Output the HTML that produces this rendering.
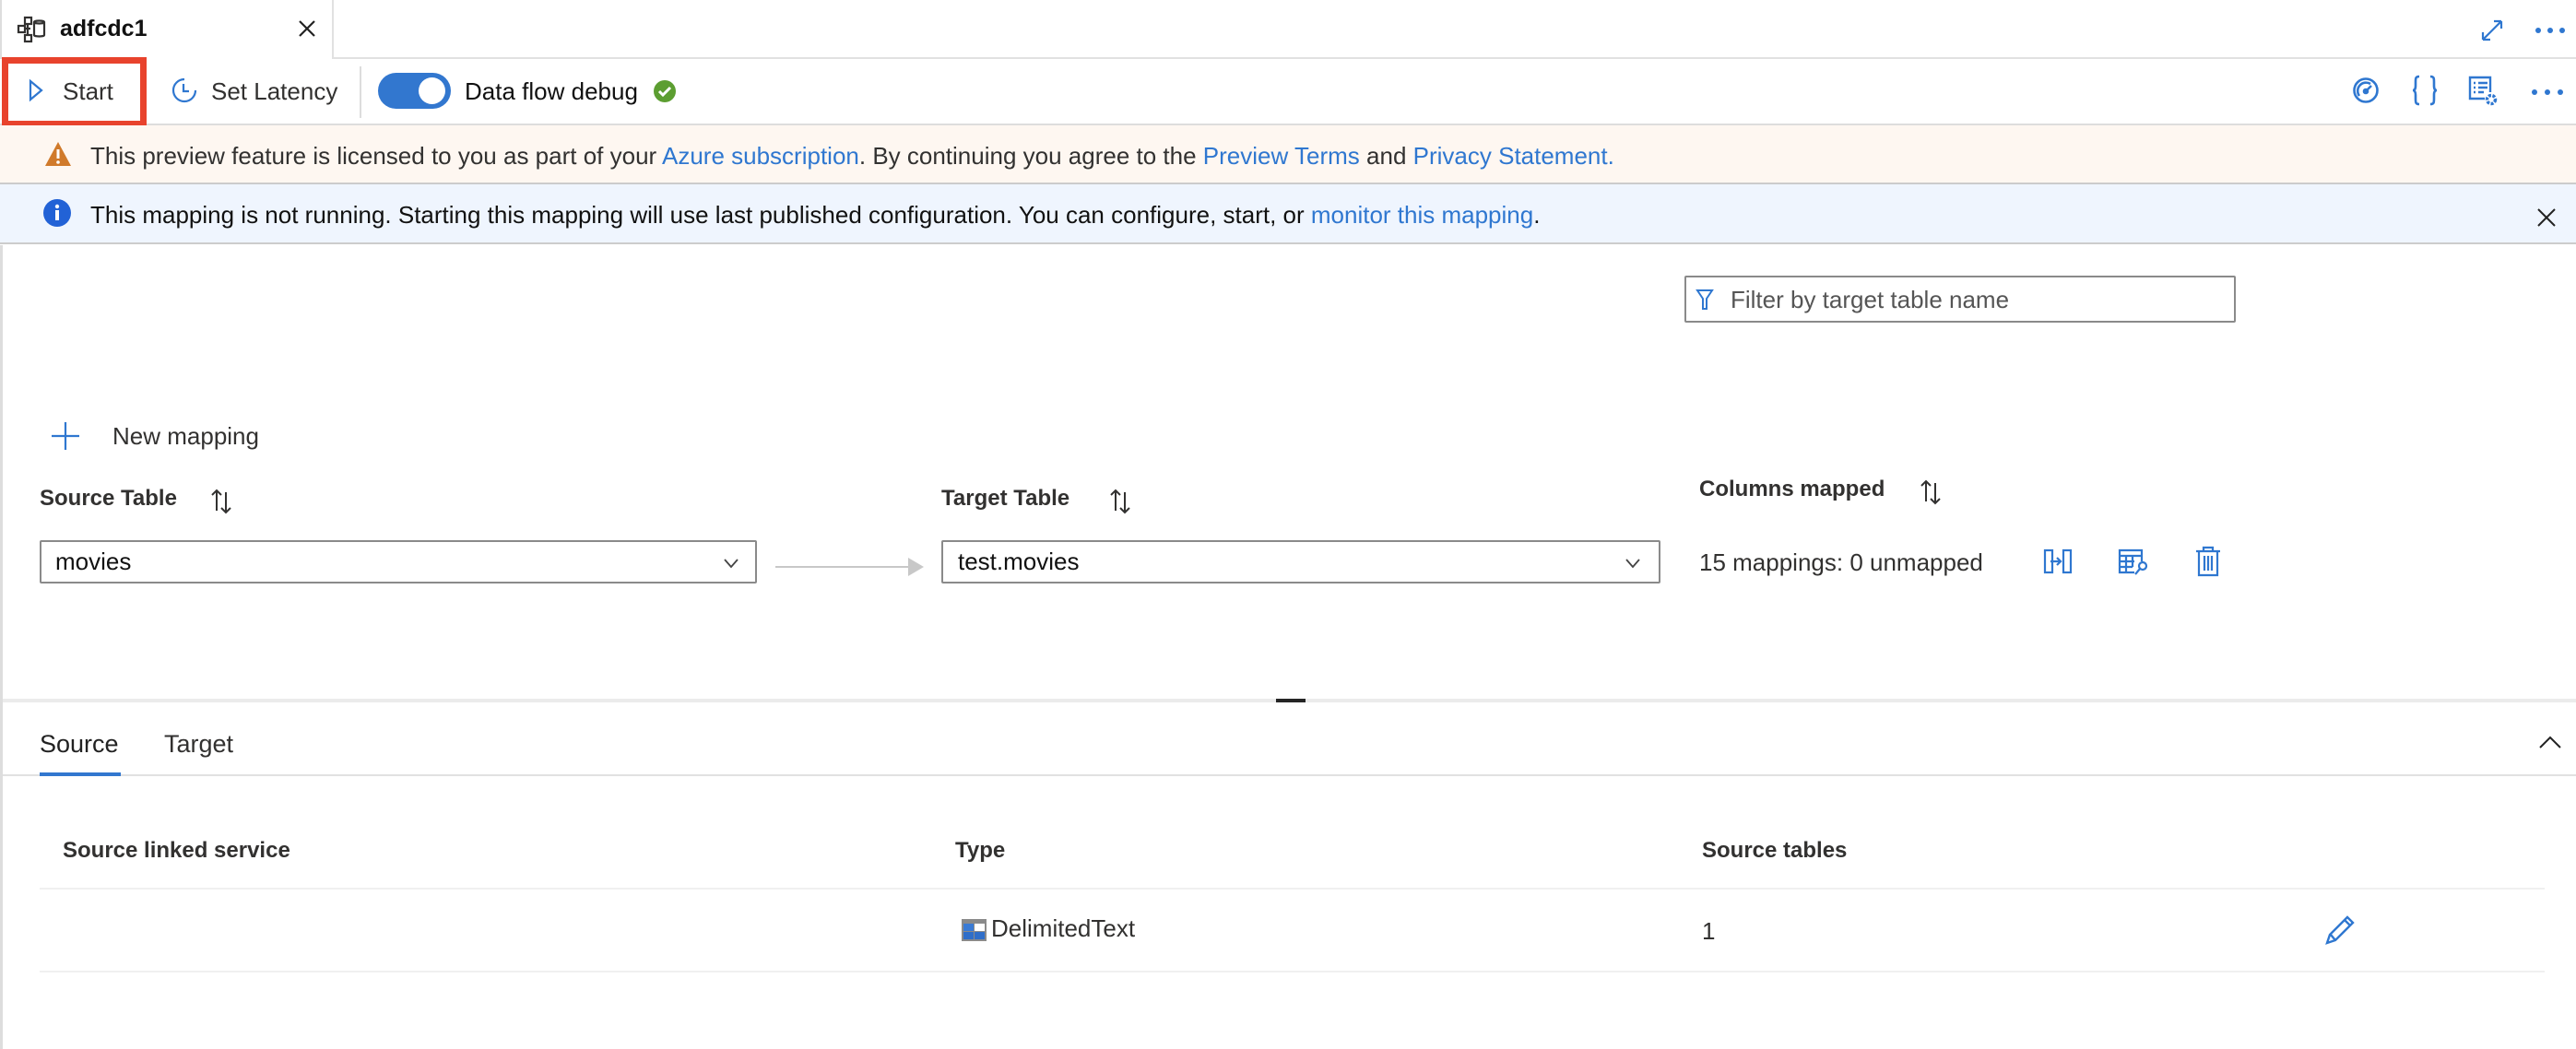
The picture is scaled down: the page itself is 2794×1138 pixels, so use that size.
<!DOCTYPE html>
<html><head><meta charset="utf-8">
<style>
*{margin:0;padding:0;box-sizing:border-box}
body{width:2794px;height:1138px;position:relative;background:#fff;font-family:"Liberation Sans",sans-serif;color:#323130;overflow:hidden;font-size:26px}
.a{position:absolute;white-space:nowrap}
.b{font-weight:bold;font-size:24px}
.l{color:#2f77d0}
svg{position:absolute;overflow:visible}
</style></head><body>
<div class="a" style="left:0;top:0;width:2794px;height:64px;background:#fff;border-bottom:2px solid #e1e1e1"></div>
<div class="a" style="left:0;top:0;width:362px;height:64px;background:#fff;border-right:2px solid #e1e1e1;border-left:2px solid #ddd"></div>
<svg style="left:18px;top:16px" width="32" height="32" viewBox="0 0 32 32" fill="none" stroke="#323130" stroke-width="2.2"><rect x="2" y="12" width="7" height="7"/><rect x="9" y="3" width="7" height="7"/><rect x="9" y="22" width="7" height="7"/><path d="M9 15h6M12 10v12"/><path d="M19 8c0-2 11-2 11 0v14c0 2-11 2-11 0z M19 8c0 2 11 2 11 0"/></svg>
<div class="a b" style="left:65px;top:17px;font-size:25px;color:#111">adfcdc1</div>
<svg style="left:324px;top:22px" width="18" height="18" stroke="#222" stroke-width="2.2"><path d="M1 1L17 17M17 1L1 17"/></svg>
<svg style="left:2692px;top:22px" width="22" height="22" stroke="#2f77d0" stroke-width="2.2" fill="none"><path d="M1 21L21 1M1 21v-8M1 21h8M21 1h-8M21 1v8"/></svg>
<div class="a" style="left:2750px;top:30px;width:6px;height:6px;border-radius:3px;background:#2f77d0;box-shadow:13px 0 #2f77d0,26px 0 #2f77d0"></div>
<div class="a" style="left:0;top:134px;width:2794px;height:2px;background:#ddd"></div>
<div class="a" style="left:2px;top:62px;width:157px;height:76px;border:7px solid #e8432d"></div>
<svg style="left:31px;top:86px" width="16" height="24" stroke="#2f77d0" stroke-width="2.2" fill="none"><path d="M2 2L14 12L2 22z"/></svg>
<div class="a" style="left:68px;top:84px;font-size:26px">Start</div>
<svg style="left:186px;top:84px" width="28" height="28" stroke="#2f77d0" stroke-width="2.2" fill="none"><path d="M14 2a12 12 0 1 0 12 12" stroke-dasharray="60 4 3 4 3 4"/><path d="M13 7v8h6"/></svg>
<div class="a" style="left:229px;top:84px;font-size:26px">Set Latency</div>
<div class="a" style="left:390px;top:72px;width:2px;height:56px;background:#ddd"></div>
<div class="a" style="left:410px;top:79px;width:79px;height:39px;border-radius:20px;background:#3277cf"></div>
<div class="a" style="left:454px;top:84px;width:29px;height:29px;border-radius:15px;background:#fff"></div>
<div class="a" style="left:504px;top:84px;font-size:26px;color:#111">Data flow debug</div>
<svg style="left:709px;top:87px" width="24" height="24"><circle cx="12" cy="12" r="12" fill="#5c9e31"/><path d="M6 12l4 4 8-8" stroke="#fff" stroke-width="3" fill="none"/></svg>
<svg style="left:2552px;top:84px" width="28" height="28" stroke="#2f77d0" stroke-width="2.6" fill="none"><circle cx="14" cy="14" r="12.5"/><path d="M7 20a9 9 0 0 1 12-13"/><path d="M14 15l6-6"/><circle cx="14" cy="15" r="2" fill="#2f77d0"/></svg>
<svg style="left:2616px;top:82px" width="28" height="32" stroke="#2f77d0" stroke-width="2.6" fill="none"><path d="M8 1c-4 0-4 2-4 6v4c0 3-1 5-3 5 2 0 3 2 3 5v4c0 4 0 6 4 6"/><path d="M20 1c4 0 4 2 4 6v4c0 3 1 5 3 5-2 0-3 2-3 5v4c0 4 0 6-4 6"/></svg>
<svg style="left:2677px;top:82px" width="34" height="34" stroke="#2f77d0" stroke-width="2.4" fill="none"><path d="M18 25H2V2h22v16"/><path d="M6 8h2M11 8h10M6 13h2M11 13h10M6 18h2M11 18h6"/><circle cx="25" cy="26" r="4.5" stroke-dasharray="3 1.5" stroke-width="3.5"/></svg>
<div class="a" style="left:2746px;top:97px;width:6px;height:6px;border-radius:3px;background:#2f77d0;box-shadow:14px 0 #2f77d0,28px 0 #2f77d0"></div>
<div class="a" style="left:0;top:136px;width:2794px;height:64px;background:#fef7f1;border-bottom:2px solid #ccc"></div>
<svg style="left:48px;top:153px" width="30" height="28"><path d="M15 1L29 27H1z" fill="#d07a2b"/><path d="M15 9v10" stroke="#fff" stroke-width="3"/><circle cx="15" cy="23" r="1.8" fill="#fff"/></svg>
<div class="a" style="left:98px;top:154px">This preview feature is licensed to you as part of your <span class="l">Azure subscription</span>. By continuing you agree to the <span class="l">Preview Terms</span> and <span class="l">Privacy Statement.</span></div>
<div class="a" style="left:0;top:200px;width:2794px;height:65px;background:#eff5fe;border-bottom:2px solid #ccc"></div>
<svg style="left:47px;top:216px" width="30" height="30"><circle cx="15" cy="15" r="15" fill="#2262d6"/><rect x="13" y="12" width="4" height="11" fill="#fff"/><circle cx="15" cy="8" r="2.2" fill="#fff"/></svg>
<div class="a" style="left:98px;top:218px;color:#111">This mapping is not running. Starting this mapping will use last published configuration. You can configure, start, or <span class="l">monitor this mapping</span>.</div>
<svg style="left:2752px;top:226px" width="20" height="20" stroke="#222" stroke-width="2"><path d="M1 1L19 19M19 1L1 19"/></svg>
<div class="a" style="left:0;top:266px;width:3px;height:872px;background:#ddd"></div>
<div class="a" style="left:1827px;top:299px;width:598px;height:51px;border:2px solid #8a8a8a;border-radius:2px"></div>
<svg style="left:1840px;top:314px" width="18" height="22" stroke="#2f77d0" stroke-width="2" fill="none"><path d="M1 1h16L11 10v11H7V10z"/></svg>
<div class="a" style="left:1877px;top:310px;color:#555">Filter by target table name</div>
<svg style="left:56px;top:458px" width="30" height="30" stroke="#2f77d0" stroke-width="2.2"><path d="M15 0v30M0 15h30"/></svg>
<div class="a" style="left:122px;top:458px">New mapping</div>
<div class="a b" style="left:43px;top:527px">Source Table</div>
<div class="a b" style="left:1021px;top:527px">Target Table</div>
<div class="a b" style="left:1843px;top:517px">Columns mapped</div>
<svg style="left:228px;top:530px" width="24" height="28" stroke="#323130" stroke-width="2" fill="none"><path d="M7 24V2M2 7l5-5 5 5M17 4v22M12 21l5 5 5-5"/></svg>
<svg style="left:1203px;top:530px" width="24" height="28" stroke="#323130" stroke-width="2" fill="none"><path d="M7 24V2M2 7l5-5 5 5M17 4v22M12 21l5 5 5-5"/></svg>
<svg style="left:2082px;top:520px" width="24" height="28" stroke="#323130" stroke-width="2" fill="none"><path d="M7 24V2M2 7l5-5 5 5M17 4v22M12 21l5 5 5-5"/></svg>
<div class="a" style="left:43px;top:586px;width:778px;height:47px;border:2px solid #8a8a8a;border-radius:2px"></div>
<div class="a" style="left:60px;top:594px;color:#111">movies</div>
<svg style="left:785px;top:606px" width="16" height="10" stroke="#444" stroke-width="1.8" fill="none"><path d="M1 1l7 8 7-8"/></svg>
<div class="a" style="left:841px;top:614px;width:146px;height:2px;background:#c8c8c8"></div>
<svg style="left:985px;top:605px" width="17" height="20"><path d="M0 0L17 10L0 20z" fill="#c8c8c8"/></svg>
<div class="a" style="left:1021px;top:586px;width:780px;height:47px;border:2px solid #8a8a8a;border-radius:2px"></div>
<div class="a" style="left:1039px;top:594px;color:#111">test.movies</div>
<svg style="left:1763px;top:606px" width="16" height="10" stroke="#444" stroke-width="1.8" fill="none"><path d="M1 1l7 8 7-8"/></svg>
<div class="a" style="left:1843px;top:595px">15 mappings: 0 unmapped</div>
<svg style="left:2217px;top:595px" width="30" height="28" stroke="#2f77d0" stroke-width="2.2" fill="none"><rect x="1" y="2" width="8" height="24"/><rect x="21" y="2" width="8" height="24"/><path d="M7 14h10M14 10l4 4-4 4"/></svg>
<svg style="left:2298px;top:595px" width="32" height="32" stroke="#2f77d0" stroke-width="2.2" fill="none"><path d="M17 26H1V2h24v12"/><path d="M1 8h24M1 14h16M1 20h14M8 8v18M15 8v12"/><circle cx="26" cy="19" r="4"/><path d="M23 22l-5 6"/></svg>
<svg style="left:2381px;top:592px" width="28" height="34" stroke="#2f77d0" stroke-width="2.2" fill="none"><path d="M1 6h26M9 6V2h10v4M4 6v26h20V6M10 11v16M14 11v16M18 11v16"/></svg>
<div class="a" style="left:3px;top:758px;width:2791px;height:4px;background:#ebebeb"></div>
<div class="a" style="left:1384px;top:758px;width:32px;height:4px;background:#252525"></div>
<div class="a" style="left:43px;top:792px;font-size:27px;color:#222">Source</div>
<div class="a" style="left:178px;top:792px;font-size:27px">Target</div>
<div class="a" style="left:3px;top:840px;width:2791px;height:2px;background:#e1e1e1"></div>
<div class="a" style="left:43px;top:838px;width:88px;height:4px;background:#3277cf"></div>
<svg style="left:2754px;top:798px" width="24" height="14" stroke="#222" stroke-width="2" fill="none"><path d="M1 13L12 2l11 11"/></svg>
<div class="a b" style="left:68px;top:909px">Source linked service</div>
<div class="a b" style="left:1036px;top:909px">Type</div>
<div class="a b" style="left:1846px;top:909px">Source tables</div>
<div class="a" style="left:43px;top:963px;width:2717px;height:2px;background:#f0f0f0"></div>
<svg style="left:1043px;top:997px" width="27" height="24"><rect width="27" height="24" fill="#8a8a8a"/><rect x="2" y="5" width="11" height="8" fill="#3a7bd5"/><rect x="14" y="5" width="11" height="8" fill="#fff"/><rect x="2" y="14" width="11" height="8" fill="#2f6ec9"/><rect x="14" y="14" width="11" height="8" fill="#2f6ec9"/></svg>
<div class="a" style="left:1075px;top:992px">DelimitedText</div>
<div class="a" style="left:1846px;top:995px">1</div>
<svg style="left:2522px;top:993px" width="32" height="32" stroke="#2f77d0" stroke-width="2.4" fill="none"><path d="M2 30l3-9L24 2l6 6-19 19z M6 21l5 6 M21 5l6 6"/></svg>
<div class="a" style="left:43px;top:1053px;width:2717px;height:2px;background:#f0f0f0"></div>
</body></html>
